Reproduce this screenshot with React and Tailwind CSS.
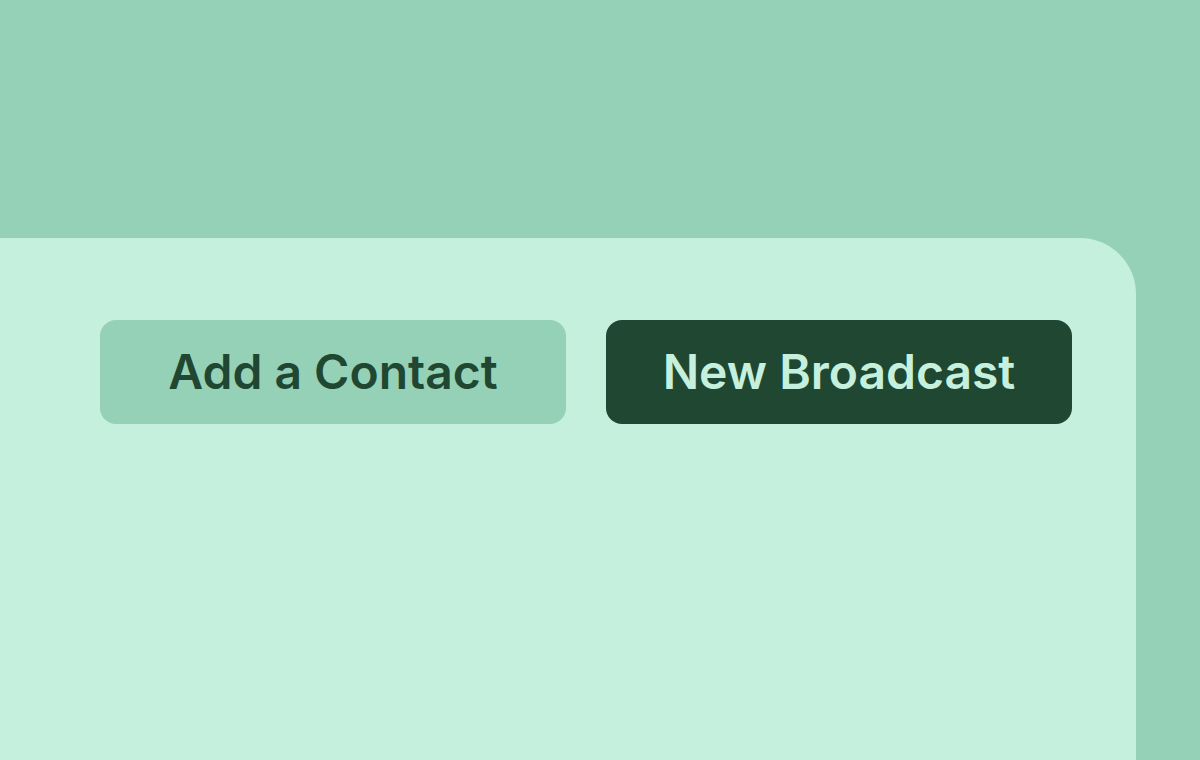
export default function App() {
  return (
    <div className="w-[1200px] h-[760px] bg-[#95d1b7] overflow-hidden flex flex-col" style={{ fontFamily: "Inter, 'Noto Sans', sans-serif" }}>
      <div className="h-[238px] shrink-0" />
      <div className="w-[1136px] flex-1 bg-[#c6f0de] rounded-tr-[56px] pt-[82px] pl-[100px]">
        <div className="flex gap-[40px]">
          <div className="w-[466px] h-[104px] rounded-[16px] bg-[#95d1b7] flex items-center justify-center text-[48px] font-semibold text-[#1f4732] tracking-[0px]">
            Add a Contact
          </div>
          <div className="w-[466px] h-[104px] rounded-[16px] bg-[#1f4732] flex items-center justify-center text-[48px] font-semibold text-[#c6f0de]">
            New Broadcast
          </div>
        </div>
      </div>
    </div>
  );
}
